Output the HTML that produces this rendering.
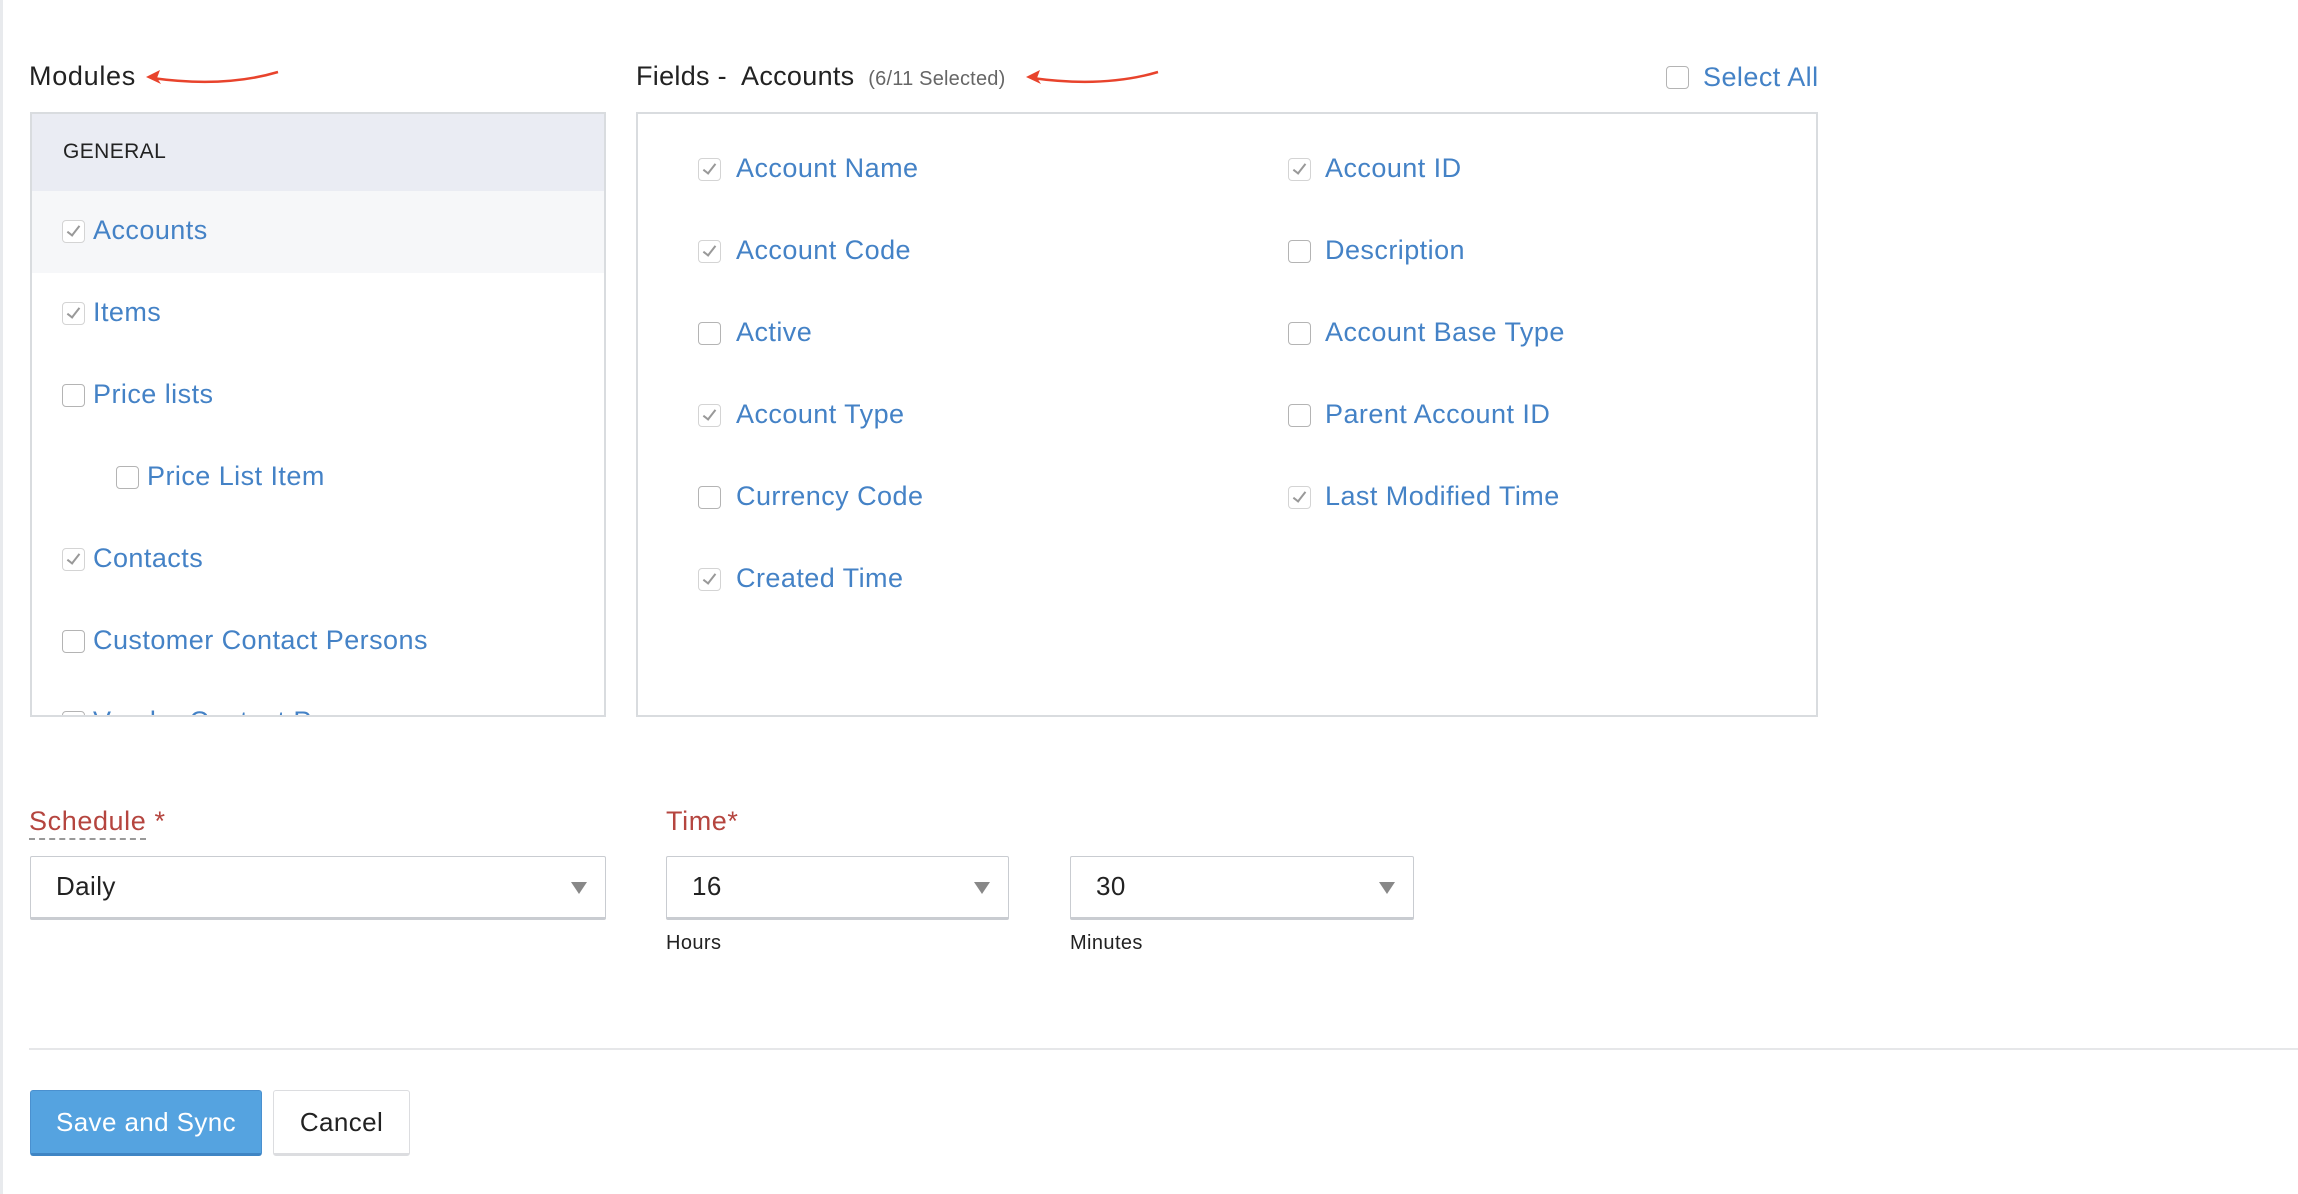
<!DOCTYPE html>
<html><head><meta charset="utf-8"><style>
*{box-sizing:border-box;margin:0;padding:0}
body{width:2298px;height:1194px;background:#fff;font-family:"Liberation Sans",sans-serif;position:relative;overflow:hidden;color:#222;letter-spacing:0.4px}
.a{position:absolute;white-space:nowrap}
.lb{font-size:27px;color:#4482c6;line-height:30px;letter-spacing:0.45px}
.cb{position:absolute;width:23px;height:23px;border:1.5px solid #b4b4b4;border-radius:4px;background:#fff}
.cb.c{border-color:#d4d4d4}
.cb.c::after{content:"";position:absolute;left:7px;top:2px;width:5px;height:11px;border-right:2px solid #999;border-bottom:2px solid #999;transform:rotate(38deg)}
.sel{position:absolute;height:64px;border:1.5px solid #c9ccd1;border-bottom:3px solid #c9ccd1;border-radius:2px;background:#fff;font-size:26px;line-height:58px;padding-left:25px;color:#222}
.sel::after{content:"";position:absolute;right:18px;top:25px;border-left:8px solid transparent;border-right:8px solid transparent;border-top:12px solid #888}
</style></head><body>
<div class="a" style="left:0;top:0;width:3px;height:1194px;background:#e8eaed"></div>

<div class="a" style="left:29px;top:61px;font-size:27px;letter-spacing:0.7px">Modules</div>
<svg class="a" style="left:144px;top:66px" width="140" height="24"><path d="M8 12 Q80 22 134 6" stroke="#e8432c" stroke-width="2.5" fill="none"/><path d="M2 11 L16 4 L13 12 L17 18 Z" fill="#e8432c"/></svg>

<div class="a" style="left:636px;top:61px;font-size:27px;letter-spacing:0.3px">Fields -&nbsp; Accounts <span style="font-size:20px;color:#666;margin-left:6px;letter-spacing:0.2px">(6/11 Selected)</span></div>
<svg class="a" style="left:1024px;top:66px" width="140" height="24"><path d="M8 12 Q80 22 134 6" stroke="#e8432c" stroke-width="2.5" fill="none"/><path d="M2 11 L16 4 L13 12 L17 18 Z" fill="#e8432c"/></svg>

<div class="cb" style="left:1666px;top:66px"></div>
<div class="a lb" style="left:1703px;top:62px;font-size:27px">Select All</div>

<div class="a" style="left:30px;top:112px;width:576px;height:605px;border:2px solid #d9dcdf;overflow:hidden">
 <div style="position:absolute;left:0;top:0;width:100%;height:77px;background:#eaecf3"></div>
 <div style="position:absolute;left:31px;top:26px;font-size:21px;color:#222">GENERAL</div>
 <div style="position:absolute;left:0;top:77px;width:100%;height:82px;background:#f6f7f9"></div>
</div>
<div class="cb c" style="left:62px;top:220px"></div><div class="a lb" style="left:93px;top:215px">Accounts</div>
<div class="cb c" style="left:62px;top:302px"></div><div class="a lb" style="left:93px;top:297px">Items</div>
<div class="cb" style="left:62px;top:384px"></div><div class="a lb" style="left:93px;top:379px">Price lists</div>
<div class="cb" style="left:116px;top:466px"></div><div class="a lb" style="left:147px;top:461px">Price List Item</div>
<div class="cb c" style="left:62px;top:548px"></div><div class="a lb" style="left:93px;top:543px">Contacts</div>
<div class="cb" style="left:62px;top:630px"></div><div class="a lb" style="left:93px;top:625px">Customer Contact Persons</div>
<div class="a" style="left:32px;top:709px;width:572px;height:6px;overflow:hidden"><div class="cb" style="left:30px;top:2px"></div><div class="a lb" style="left:61px;top:-3px">Vendor Contact Persons</div></div>

<div class="a" style="left:636px;top:112px;width:1182px;height:605px;border:2px solid #d9dcdf"></div>
<div class="cb c" style="left:698px;top:158px"></div><div class="a lb" style="left:736px;top:153px">Account Name</div>
<div class="cb c" style="left:698px;top:240px"></div><div class="a lb" style="left:736px;top:235px">Account Code</div>
<div class="cb" style="left:698px;top:322px"></div><div class="a lb" style="left:736px;top:317px">Active</div>
<div class="cb c" style="left:698px;top:404px"></div><div class="a lb" style="left:736px;top:399px">Account Type</div>
<div class="cb" style="left:698px;top:486px"></div><div class="a lb" style="left:736px;top:481px">Currency Code</div>
<div class="cb c" style="left:698px;top:568px"></div><div class="a lb" style="left:736px;top:563px">Created Time</div>
<div class="cb c" style="left:1288px;top:158px"></div><div class="a lb" style="left:1325px;top:153px">Account ID</div>
<div class="cb" style="left:1288px;top:240px"></div><div class="a lb" style="left:1325px;top:235px">Description</div>
<div class="cb" style="left:1288px;top:322px"></div><div class="a lb" style="left:1325px;top:317px">Account Base Type</div>
<div class="cb" style="left:1288px;top:404px"></div><div class="a lb" style="left:1325px;top:399px">Parent Account ID</div>
<div class="cb c" style="left:1288px;top:486px"></div><div class="a lb" style="left:1325px;top:481px">Last Modified Time</div>

<div class="a" style="left:29px;top:806px;font-size:27px;color:#b5453f;letter-spacing:0.6px"><span style="border-bottom:2px dashed #999;padding-bottom:2px">Schedule</span> *</div>
<div class="a" style="left:666px;top:806px;font-size:27px;color:#b5453f;letter-spacing:0.6px">Time*</div>
<div class="sel" style="left:30px;top:856px;width:576px">Daily</div>
<div class="sel" style="left:666px;top:856px;width:343px">16</div>
<div class="sel" style="left:1070px;top:856px;width:344px">30</div>
<div class="a" style="left:666px;top:932px;font-size:20px">Hours</div>
<div class="a" style="left:1070px;top:932px;font-size:20px">Minutes</div>

<div class="a" style="left:29px;top:1048px;width:2269px;height:2px;background:#e6e7e9"></div>

<div class="a" style="left:30px;top:1090px;width:232px;height:66px;background:#55a3e0;border:1px solid #4a90cf;border-bottom:3px solid #3f85c4;border-radius:3px;color:#fff;font-size:26px;line-height:62px;text-align:center">Save and Sync</div>
<div class="a" style="left:273px;top:1090px;width:137px;height:66px;background:#fff;border:1.5px solid #dcdde0;border-bottom:3px solid #dcdde0;border-radius:3px;font-size:26px;line-height:62px;text-align:center">Cancel</div>
</body></html>
